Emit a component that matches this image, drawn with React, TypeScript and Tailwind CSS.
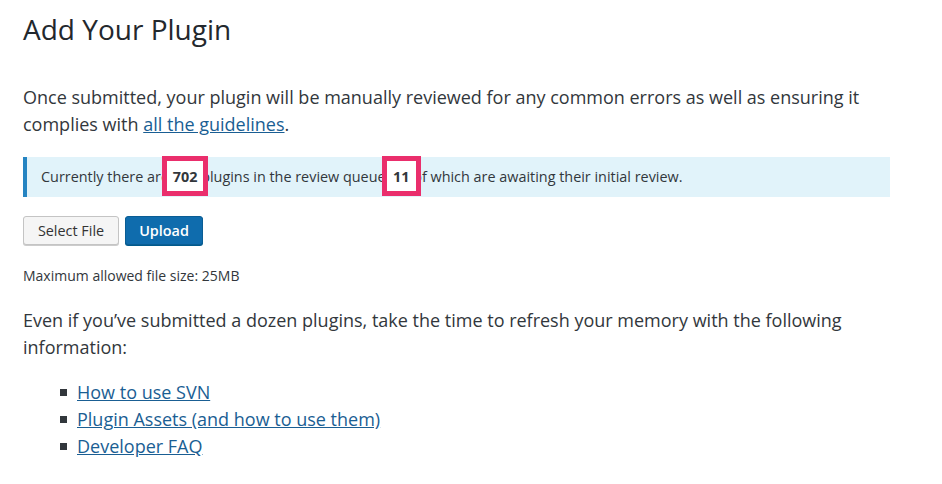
import React from "react";

const Marked = ({ value }: { value: string }) => (
  <span className="relative inline-block font-bold">
    {/* annotation box drawn behind the number */}
    <span className="absolute -left-[11px] -right-[11px] -top-[10px] -bottom-[8px] border-[5px] border-[#ea2e6c] bg-white" />
    <span className="relative">{value}</span>
  </span>
);

export default function App() {
  return (
    <div
      className="min-h-[484px] bg-white pl-[23px] pr-[52px] pt-[10px] text-[#32373c]"
      style={{ fontFamily: '"Open Sans", "Noto Sans", sans-serif' }}
    >
      <h1 className="text-[28px] font-normal leading-[38px] text-[#23282d]">Add Your Plugin</h1>

      <p className="mt-[36px] text-[18px] leading-[27px]">
        Once submitted, your plugin will be manually reviewed for any common errors as well as ensuring it complies
        with{" "}
        <a href="#" className="text-[#1a5e93] underline">
          all the guidelines
        </a>
        .
      </p>

      <div className="mt-[19px] flex h-[40px] items-center border-l-[4px] border-[#2584c2] bg-[#e1f3fa] pl-[14px] text-[14.4px]">
        <span>
          Currently there are <Marked value="702" /> plugins in the review queue, <Marked value="11" /> of which are
          awaiting their initial review.
        </span>
      </div>

      <div className="mt-[19px] flex gap-[6px]">
        <button className="h-[29px] w-[96px] rounded-[3px] border border-[#c4c4c4] bg-[#f5f5f5] text-[14.4px] text-[#333] shadow-[0_1px_0_#ccc]">
          Select File
        </button>
        <button className="h-[29px] w-[78px] rounded-[3px] border border-[#0a5d94] bg-[#0f6cad] text-[14.4px] font-semibold text-white shadow-[0_1px_0_#005a8c]">
          Upload
        </button>
      </div>

      <p className="mt-[21px] text-[14px] leading-[20px]">Maximum allowed file size: 25MB</p>

      <p className="mt-[21px] text-[18px] leading-[27px]">
        Even if you&rsquo;ve submitted a dozen plugins, take the time to refresh your memory with the following
        information:
      </p>

      <ul className="mt-[18px] pl-[37px] text-[18px] leading-[27px]">
        {["How to use SVN", "Plugin Assets (and how to use them)", "Developer FAQ"].map(item => (
          <li key={item} className="flex items-center gap-[10px]">
            <span className="h-[7px] w-[7px] bg-[#32373c]" />
            <a href="#" className="text-[#1a5e93] underline">
              {item}
            </a>
          </li>
        ))}
      </ul>
    </div>
  );
}
